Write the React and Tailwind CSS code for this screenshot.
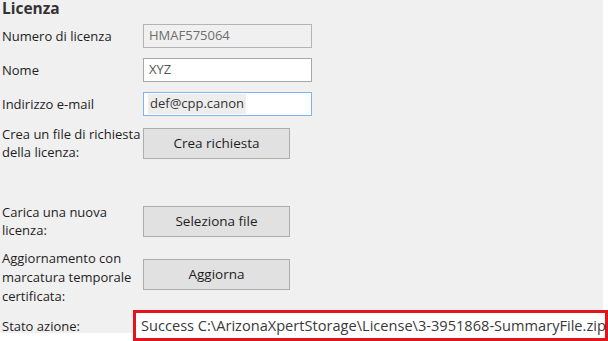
import React from "react";

const font = { fontFamily: '"Open Sans", "Noto Sans", sans-serif' };

function Row({ label, children, className = "", leading = "leading-[18px]" }) {
  return (
    <div className={`flex ${className}`}>
      <div className={`w-[141px] shrink-0 pl-[2px] text-[13px] ${leading} text-[#1e1e1e]`}>
        {label}
      </div>
      {children}
    </div>
  );
}

function Button({ children }) {
  return (
    <button className="w-[147px] h-[31px] border border-[#adadad] bg-[#e1e1e1] text-[13.5px] text-[#1e1e1e]">
      {children}
    </button>
  );
}

export default function App() {
  return (
    <div className="w-[608px] h-[341px] bg-white overflow-hidden" style={font}>
      <div className="w-[603px] h-[333px] bg-[#f0f0f0] flex flex-col">
        <h2 className="pl-[2px] text-[15.5px] font-bold leading-[17px] text-[#333]">
          Licenza
        </h2>

        <Row label="Numero di licenza" className="mt-[7px] items-center">
          <div className="ml-[2px] w-[169px] h-[24px] border border-[#b4b4b4] bg-[#f0f0f0] px-[5px] flex items-center text-[13px] text-[#6d6d6d]">
            HMAF575064
          </div>
        </Row>

        <Row label="Nome" className="mt-[10px] items-center">
          <div className="ml-[2px] w-[169px] h-[24px] border border-[#a8a8a8] bg-white px-[5px] flex items-center text-[13px] text-[#555]">
            XYZ
          </div>
        </Row>

        <Row label="Indirizzo e-mail" className="mt-[10px] items-center">
          <div className="ml-[2px] w-[169px] h-[24px] border border-[#7eb4ea] bg-white px-[4px] flex items-center text-[13px] text-[#333]">
            <span className="bg-[#ededed] px-[2px]">def@cpp.canon</span>
          </div>
        </Row>

        <Row
          label={<>Crea un file di richiesta<br />della licenza:</>}
          className="mt-[9px] items-center"
        >
          <div className="ml-[2px]">
            <Button>Crea richiesta</Button>
          </div>
        </Row>

        <Row
          label={<>Carica una nuova<br />licenza:</>}
          className="mt-[42px] items-center"
        >
          <div className="ml-[2px]">
            <Button>Seleziona file</Button>
          </div>
        </Row>

        <Row
          label={<>Aggiornamento con<br />marcatura temporale<br />certificata:</>}
          className="mt-[10px] items-start"
          leading="leading-[19px]"
        >
          <div className="ml-[2px] mt-[10px]">
            <Button>Aggiorna</Button>
          </div>
        </Row>

        <Row label="Stato azione:" className="mt-[4px] items-center">
          <div className="ml-[-8px] w-[475px] h-[31px] shrink-0 border-[3px] border-[#e3141c] bg-white pl-[5px] flex items-center text-[14.6px] text-[#3a3a3a] whitespace-nowrap">
            Success C:\ArizonaXpertStorage\License\3-3951868-SummaryFile.zip
          </div>
        </Row>
      </div>
    </div>
  );
}
